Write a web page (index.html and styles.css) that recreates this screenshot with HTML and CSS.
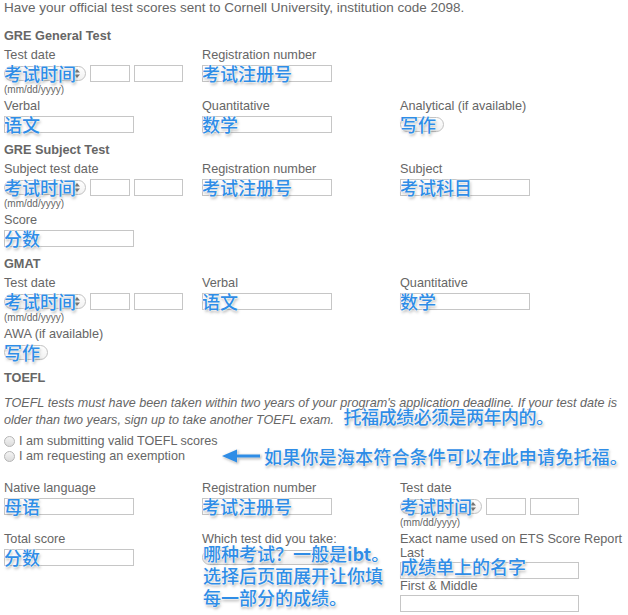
FILE: index.html
```
<html>
<head>
	<title>Test Scores</title>
	<link rel="stylesheet" href="styles.css">
</head>
<body>
	<p class="intro">Have your official test scores sent to Cornell University, institution code 2098.</p>

	<h3>GRE General Test</h3>
	<div class="row">
		<div class="field">
			<label>Test date</label>
			<div class="ctl date">
				<span class="sel sel-month"><svg class="updown" width="6" height="9" viewBox="0 0 6 9"><path d="M3 0L6 3.5H0zM3 9L0 5.5H6z" fill="#777"/></svg></span>
				<input type="text" class="in-day">
				<input type="text" class="in-year">
				<span class="note">考试时间</span>
			</div>
			<div class="hint">(mm/dd/yyyy)</div>
		</div>
		<div class="field">
			<label>Registration number</label>
			<div class="ctl"><input type="text"><span class="note">考试注册号</span></div>
		</div>
		<div class="field"></div>
	</div>
	<div class="row">
		<div class="field">
			<label>Verbal</label>
			<div class="ctl"><input type="text"><span class="note">语文</span></div>
		</div>
		<div class="field">
			<label>Quantitative</label>
			<div class="ctl"><input type="text"><span class="note">数学</span></div>
		</div>
		<div class="field">
			<label>Analytical (if available)</label>
			<div class="ctl"><span class="sel sel-small"></span><span class="note">写作</span></div>
		</div>
	</div>

	<h3>GRE Subject Test</h3>
	<div class="row">
		<div class="field">
			<label>Subject test date</label>
			<div class="ctl date">
				<span class="sel sel-month"><svg class="updown" width="6" height="9" viewBox="0 0 6 9"><path d="M3 0L6 3.5H0zM3 9L0 5.5H6z" fill="#777"/></svg></span>
				<input type="text" class="in-day">
				<input type="text" class="in-year">
				<span class="note">考试时间</span>
			</div>
			<div class="hint">(mm/dd/yyyy)</div>
		</div>
		<div class="field">
			<label>Registration number</label>
			<div class="ctl"><input type="text"><span class="note">考试注册号</span></div>
		</div>
		<div class="field">
			<label>Subject</label>
			<div class="ctl"><input type="text"><span class="note">考试科目</span></div>
		</div>
	</div>
	<div class="row">
		<div class="field">
			<label>Score</label>
			<div class="ctl"><input type="text"><span class="note">分数</span></div>
		</div>
	</div>

	<h3>GMAT</h3>
	<div class="row">
		<div class="field">
			<label>Test date</label>
			<div class="ctl date">
				<span class="sel sel-month"><svg class="updown" width="6" height="9" viewBox="0 0 6 9"><path d="M3 0L6 3.5H0zM3 9L0 5.5H6z" fill="#777"/></svg></span>
				<input type="text" class="in-day">
				<input type="text" class="in-year">
				<span class="note">考试时间</span>
			</div>
			<div class="hint">(mm/dd/yyyy)</div>
		</div>
		<div class="field">
			<label>Verbal</label>
			<div class="ctl"><input type="text"><span class="note">语文</span></div>
		</div>
		<div class="field">
			<label>Quantitative</label>
			<div class="ctl"><input type="text"><span class="note">数学</span></div>
		</div>
	</div>
	<div class="row">
		<div class="field">
			<label>AWA (if available)</label>
			<div class="ctl"><span class="sel sel-small"></span><span class="note">写作</span></div>
		</div>
	</div>

	<h3>TOEFL</h3>
	<p class="rule">TOEFL tests must have been taken within two years of your program's application deadline. If your test date is<br>older than two years, sign up to take another TOEFL exam. <span class="note inline">托福成绩必须是两年内的。</span></p>

	<div class="radios">
		<div class="radio-row"><span class="radio"></span>I am submitting valid TOEFL scores</div>
		<div class="radio-row"><span class="radio"></span>I am requesting an exemption</div>
		<div class="pointer">
			<svg class="arrow" width="42" height="18" viewBox="0 0 42 18"><path d="M2 9L17 2.5V7.5H40V10.5H17V15.5Z" fill="#2f8de6"/></svg>
			<span class="note">如果你是海本符合条件可以在此申请免托福。</span>
		</div>
	</div>

	<div class="row bottom">
		<div class="field">
			<label>Native language</label>
			<div class="ctl"><input type="text"><span class="note">母语</span></div>
		</div>
		<div class="field">
			<label>Registration number</label>
			<div class="ctl"><input type="text"><span class="note">考试注册号</span></div>
		</div>
		<div class="field">
			<label>Test date</label>
			<div class="ctl date">
				<span class="sel sel-month"><svg class="updown" width="6" height="9" viewBox="0 0 6 9"><path d="M3 0L6 3.5H0zM3 9L0 5.5H6z" fill="#777"/></svg></span>
				<input type="text" class="in-day">
				<input type="text" class="in-year">
				<span class="note">考试时间</span>
			</div>
			<div class="hint">(mm/dd/yyyy)</div>
		</div>
	</div>
	<div class="row">
		<div class="field">
			<label>Total score</label>
			<div class="ctl"><input type="text"><span class="note">分数</span></div>
		</div>
		<div class="field">
			<label>Which test did you take:</label>
			<div class="ctl"><span class="sel sel-wide"></span><span class="note multi">哪种考试？一般是<b>ibt</b>。<br>选择后页面展开让你填<br>每一部分的成绩。</span></div>
		</div>
		<div class="field">
			<label class="tight">Exact name used on ETS Score Report</label>
			<label class="tight">Last</label>
			<div class="ctl"><input type="text" class="in-long"><span class="note high">成绩单上的名字</span></div>
			<label class="tight">First &amp; Middle</label>
			<div class="ctl"><input type="text" class="in-long"></div>
		</div>
	</div>
</body>
</html>
```
FILE: styles.css
```
body {
    margin: 0;
    padding: 0 4px;
    font-family: "Liberation Sans", Arial, sans-serif;
    font-size: 12.7px;
    color: #666;
    background-color: #fff;
}

.intro {
    margin: 0;
    font-size: 13.5px;
    line-height: 15px;
}

h3 {
    margin: 14px 0 5px;
    font-size: 12.7px;
    line-height: 14px;
    font-weight: bold;
    color: #666;
}

.row {
    display: grid;
    grid-template-columns: 198px 198px 198px;
    margin-bottom: 4px;
}

.row + h3 {
    margin-top: 10px;
}

label {
    display: block;
    line-height: 15px;
    white-space: nowrap;
}

label.tight {
    line-height: 14px;
}

.ctl {
    position: relative;
    display: flex;
    align-items: center;
    gap: 4px;
    height: 17px;
    margin-top: 2px;
}

input {
    box-sizing: border-box;
    width: 130px;
    height: 17px;
    margin: 0;
    padding: 0 3px;
    border: 1px solid #c6c6c6;
    background: #fff;
}

.in-day {
    width: 40px;
}

.in-year {
    width: 49px;
}

.in-long {
    width: 179px;
}

.sel {
    box-sizing: border-box;
    display: flex;
    align-items: center;
    justify-content: flex-end;
    height: 15px;
    padding-right: 5px;
    border: 1px solid #c2c2c2;
    border-radius: 8px;
    background: linear-gradient(#fff, #f1f1f1);
}

.sel-month {
    width: 82px;
}

.sel-small {
    width: 44px;
}

.sel-wide {
    width: 130px;
}

.hint {
    margin-top: 2px;
    font-size: 10px;
    line-height: 11px;
}

.note {
    position: absolute;
    left: 0;
    top: -3px;
    font-family: "Noto Sans CJK SC", "Liberation Sans", sans-serif;
    font-size: 18px;
    font-weight: 500;
    line-height: 22px;
    color: #2f8de6;
    white-space: nowrap;
    text-shadow: 0 0 2px #fff, 0 0 2px #fff, 0 0 1px #fff, 1px 2px 3px rgba(0, 0, 0, 0.35);
}

.note.multi {
    top: -7px;
    left: 1px;
}

.note.high {
    top: -7px;
}

.note.inline {
    position: static;
    margin-left: 6px;
    font-style: normal;
    line-height: 0;
    letter-spacing: -0.5px;
}

.rule {
    margin: 10px 0 5px;
    font-size: 12.6px;
    font-style: italic;
    line-height: 17px;
    white-space: nowrap;
}

.radios {
    position: relative;
    font-size: 12.6px;
    line-height: 15px;
}

.radio-row {
    display: flex;
    align-items: center;
}

.radio {
    box-sizing: border-box;
    width: 11px;
    height: 11px;
    margin-right: 4px;
    border: 1px solid #b5b5b5;
    border-radius: 50%;
    background: linear-gradient(#f4f4f4, #dcdcdc);
}

.pointer {
    position: absolute;
    left: 216px;
    top: 11px;
    display: flex;
    align-items: center;
    height: 22px;
}

.arrow {
    filter: drop-shadow(0 0 1px #fff) drop-shadow(1px 1px 1px rgba(0, 0, 0, 0.35));
}

.pointer .note {
    position: static;
    margin-left: 2px;
    letter-spacing: 0.2px;
}

.row.bottom {
    margin-top: 17px;
}
```
